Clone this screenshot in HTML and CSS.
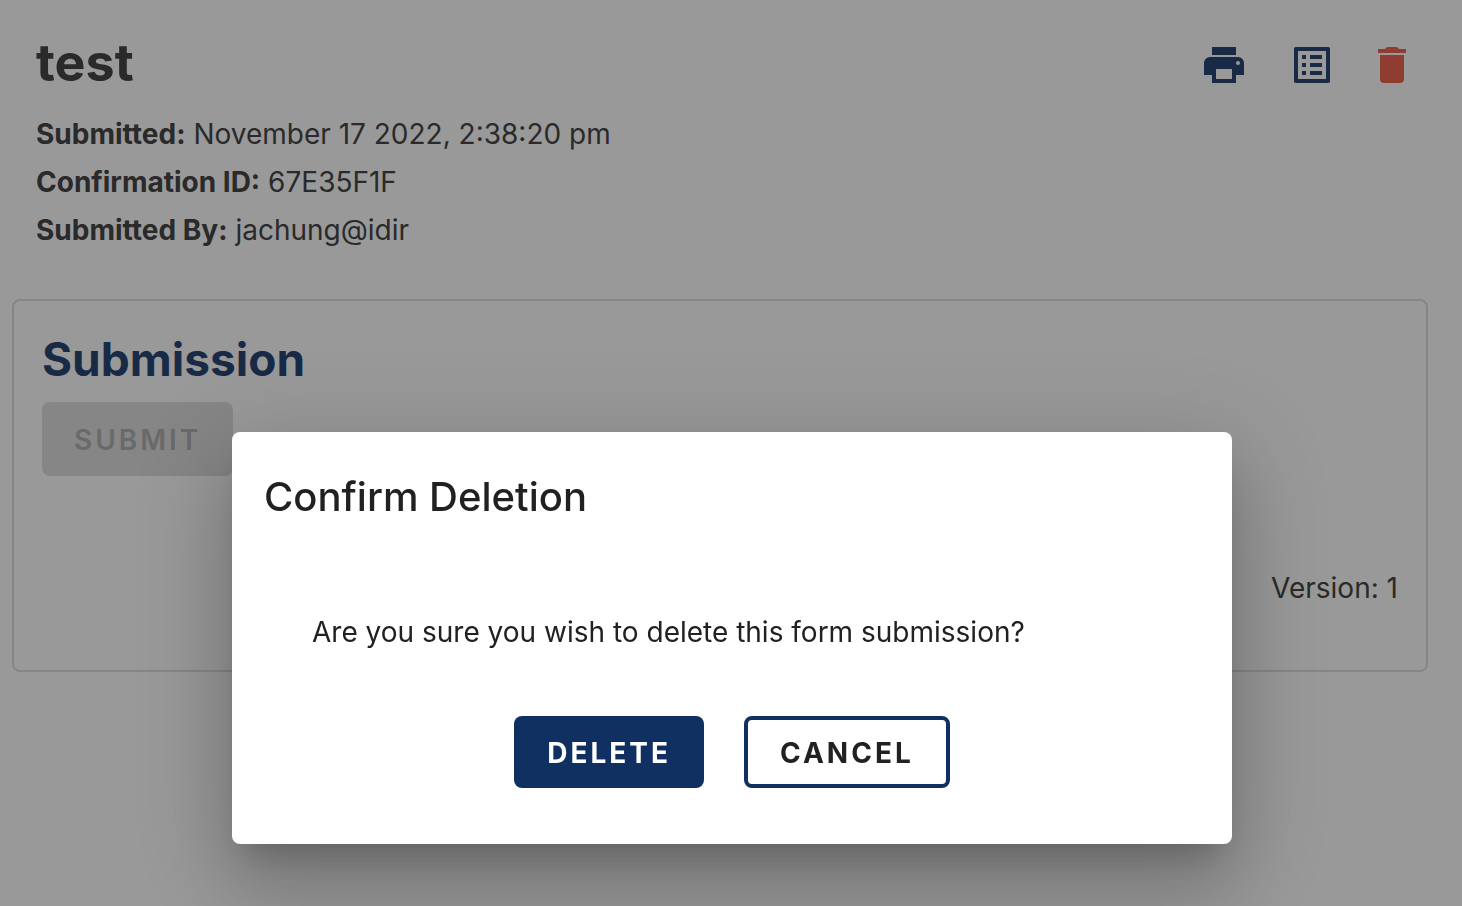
FILE: index.html
```html
<!DOCTYPE html>
<html lang="en">
<head>
<meta charset="utf-8">
<title>Form submission</title>
<link rel="stylesheet" href="styles.css">
</head>
<body>
<main class="page">
  <header class="header">
    <div class="details">
      <h1 class="title">test</h1>
      <p class="detail"><strong>Submitted:</strong> November 17 2022, 2:38:20 pm</p>
      <p class="detail"><strong>Confirmation ID:</strong> 67E35F1F</p>
      <p class="detail"><strong>Submitted By:</strong> jachung@idir</p>
    </div>
    <div class="actions">
      <button class="icon-button icon-button-print" type="button" aria-label="Print"><svg viewBox="0 0 24 24"><path d="M18 3H6v4h12m1 5a1 1 0 0 1-1-1 1 1 0 0 1 1-1 1 1 0 0 1 1 1 1 1 0 0 1-1 1m-3 7H8v-5h8m3-6H5a3 3 0 0 0-3 3v6h4v4h12v-4h4v-6a3 3 0 0 0-3-3z"/></svg></button>
      <button class="icon-button" type="button" aria-label="View submissions"><svg viewBox="0 0 24 24"><path fill-rule="evenodd" d="M3.900 3H20.100a.9.9 0 0 1 .9.9V20.100a.9.9 0 0 1-.9.9H3.900a.9.9 0 0 1-.9-.9V3.900a.9.9 0 0 1 .9-.9zM5 5v14h14V5zM7 7h2v2H7zM11 7h6v2h-6zM7 11h2v2H7zM11 11h6v2h-6zM7 15h2v2H7zM11 15h6v2h-6z"/></svg></button>
      <button class="icon-button icon-button-danger" type="button" aria-label="Delete submission"><svg viewBox="0 0 24 24"><path d="M19 4h-3.500l-1-1h-5l-1 1H5v2h14M6 19a2 2 0 0 0 2 2h8a2 2 0 0 0 2-2V7H6z"/></svg></button>
    </div>
  </header>
  <section class="card">
    <h2 class="card-title">Submission</h2>
    <button class="submit" type="button" disabled>SUBMIT</button>
    <p class="version">Version: 1</p>
  </section>
</main>
<div class="overlay">
  <div class="dialog" role="dialog" aria-modal="true" aria-labelledby="dialog-title">
    <h2 class="dialog-title" id="dialog-title">Confirm Deletion</h2>
    <p class="dialog-text">Are you sure you wish to delete this form submission?</p>
    <div class="dialog-actions">
      <button class="button button-primary" type="button">DELETE</button>
      <button class="button" type="button">CANCEL</button>
    </div>
  </div>
</div>
</body>
</html>
```
FILE: styles.css
```css
* { box-sizing: border-box; }
body {
  margin: 0;
  min-height: 100vh;
  background: #999;
  color: #2a2a2a;
  font: 28px/48px Inter, sans-serif;
}
h1, h2, p { margin: 0; }
button { font: inherit; }
.page { padding: 29px 34px 0 12px; }
.header { display: flex; justify-content: space-between; padding: 0 12px 0 24px; }
.title { font-size: 52px; line-height: 68px; margin-bottom: 13px; }
.actions { display: flex; gap: 32px; padding-top: 12px; }
.icon-button {
  display: block;
  width: 48px;
  height: 48px;
  padding: 0;
  border: 0;
  background: none;
  color: #192a47;
}
.icon-button svg { display: block; width: 100%; fill: currentColor; }
.icon-button-print { margin-right: 8px; }
.icon-button-danger { color: #8f3c31; }
.card {
  margin-top: 45px;
  padding: 28px;
  border: 2px solid #868686;
  border-radius: 8px;
}
.card-title { color: #192a47; font-size: 46px; line-height: 61px; }
.submit {
  display: block;
  height: 74px;
  margin-top: 12px;
  padding: 2px 32px 0;
  border: 0;
  border-radius: 8px;
  background: #868686;
  color: #6a6a6a;
  font-weight: 600;
  letter-spacing: 3px;
}
.version { margin-top: 88px; text-align: right; padding-bottom: 30px; }
.overlay {
  position: fixed;
  inset: 0;
  display: flex;
  justify-content: center;
  align-items: flex-start;
  padding: 432px 230px 0 232px;
}
.dialog {
  width: 100%;
  max-width: 1000px;
  padding: 32px 32px 56px;
  border-radius: 8px;
  background: #fff;
  color: #212121;
  box-shadow: 0 22px 30px -14px rgba(0,0,0,.2), 0 48px 76px 6px rgba(0,0,0,.14), 0 18px 92px 16px rgba(0,0,0,.12);
}
.dialog-title { font-size: 40px; line-height: 66px; font-weight: 500; }
.dialog-text { margin-top: 78px; padding: 0 48px; }
.dialog-actions { display: flex; justify-content: center; gap: 40px; margin-top: 60px; }
.button {
  height: 72px;
  padding: 2px 32px 0;
  border: 4px solid #113062;
  border-radius: 8px;
  background: #fff;
  color: #212121;
  font-weight: 700;
  letter-spacing: 3px;
}
.button-primary { padding: 2px 33px 0; border: 0; background: #113062; color: #fff; }
```
